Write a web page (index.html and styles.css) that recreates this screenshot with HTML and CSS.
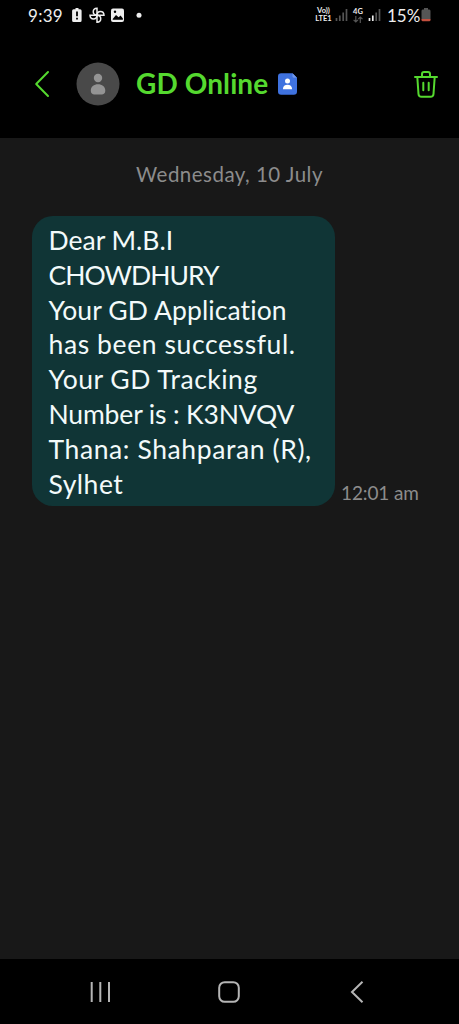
FILE: index.html
```html
<!DOCTYPE html>
<html lang="en">
<head>
<meta charset="utf-8">
<title>GD Online</title>
<link rel="stylesheet" href="styles.css">
</head>
<body>
<div class="phone">
  <header class="top">
    <div class="status">
      <span class="clock">9:39</span>
      <svg class="status-icons" width="76" height="30" viewBox="0 0 76 30">
        <path fill="#eee" d="M3.500 8h3v1.300h1.600a1.500 1.500 0 0 1 1.500 1.500v9.700a1.500 1.500 0 0 1-1.500 1.500h-6.500a1.500 1.500 0 0 1-1.500-1.500v-9.700a1.500 1.500 0 0 1 1.500-1.500h1.900z"/>
        <path stroke="#000" stroke-width="1.800" d="M5 11.500v4.700M5 17.700v1.800"/>
        <g fill="none" stroke="#eee" stroke-width="1.500">
          <path id="petal" d="M25 15.200V8.200c5 .2 5 6.800 0 7" transform="matrix(-1 0 0 1 50 0)"/>
          <use href="#petal" transform="rotate(90 25 15.200)"/>
          <use href="#petal" transform="rotate(180 25 15.200)"/>
          <use href="#petal" transform="rotate(270 25 15.200)"/>
        </g>
        <rect x="39" y="8.500" width="13" height="13.500" rx="2" fill="#eee"/>
        <path fill="#000" d="M40.700 19l3.300-4 2.600 2.300 2-1.800 2.300 3v1.200H40.700z"/>
        <circle cx="43" cy="11.700" r="1.200" fill="#000"/>
        <circle cx="67" cy="15.200" r="2.500" fill="#eee"/>
      </svg>
      <span class="volte"><span>Vo))</span><span>LTE1</span></span>
      <svg class="bars" width="13" height="14" viewBox="0 0 13 14"><path stroke="#555" stroke-width="1.700" d="M1.500 10v3M4.800 7.500V13M8.200 4.500V13M11.500 1v12"/></svg>
      <span class="network"><span>4G</span><svg width="10" height="7" viewBox="0 0 10 7"><path fill="none" stroke="#555" stroke-width="1.200" d="M2.800 0v6M.6 3.800l2.200 2.200L5 3.800M7.300 7V1M5.100 3.200L7.300 1l2.200 2.200"/></svg></span>
      <svg class="bars second" width="13" height="14" viewBox="0 0 13 14"><path stroke="#eee" stroke-width="1.700" d="M1.500 10v3M4.800 7.500V13"/><path stroke="#555" stroke-width="1.700" d="M8.200 4.500V13M11.500 1v12"/></svg>
      <span class="percent">15%</span>
      <svg class="battery" width="10" height="14" viewBox="0 0 10 14"><path fill="#555" d="M3 0h4v1.500h1.300Q9.500 1.500 9.500 3v8.500h-9V3Q.5 1.500 1.700 1.500H3z"/><path fill="#c4503f" d="M.5 11h9v1q0 1.300-1.300 1.300H1.800Q.5 13.300.5 12z"/></svg>
    </div>
    <div class="contact">
      <svg class="back" width="16" height="28" viewBox="0 0 16 28"><path d="M14 2L2.200 14 14 26"/></svg>
      <svg class="avatar" width="44" height="44" viewBox="0 0 44 44"><circle cx="22" cy="22" r="21.500" fill="#494949"/><circle cx="22" cy="16" r="4.200" fill="#949494"/><path fill="#949494" d="M14.800 28.700C14.800 24.700 18 22.300 22 22.300s7.300 2.400 7.300 6.400c0 2.600-1.700 3.700-3.500 3.700h-7.500c-1.800 0-3.500-1.100-3.500-3.700z"/></svg>
      <h1 class="name">GD Online</h1>
      <svg class="card" width="19" height="22" viewBox="0 0 19 22"><path fill="#3f72df" d="M3.200.3h11.300L19 4.800v13.700a3.200 3.200 0 0 1-3.200 3.200H3.200A3.200 3.200 0 0 1 0 18.500v-15A3.200 3.200 0 0 1 3.200.3z"/><path fill="#7097e9" d="M14.500.3L19 4.800h-3a1.500 1.500 0 0 1-1.500-1.500z"/><circle cx="9.500" cy="7.900" r="2.500" fill="#fff"/><path fill="#fff" d="M4.900 16.200c0-2.900 2-4.400 4.600-4.400s4.600 1.500 4.600 4.400z"/></svg>
      <svg class="trash" width="24" height="28" viewBox="0 0 24 28"><path d="M1 7h22M8 7V4q0-2 2-2h4q2 0 2 2v3M3.300 7l1.200 17q.2 2.800 3 2.800h9q2.800 0 3-2.800L20.700 7M9.300 12.800v7.400M14.700 12.800v7.400"/></svg>
    </div>
  </header>
  <main class="thread">
    <p class="date">Wednesday, 10 July</p>
    <div class="message">
      <div class="bubble">
        <span class="line l1">Dear M.B.I</span>
        <span class="line l2">CHOWDHURY</span>
        <span class="line l3">Your GD Application</span>
        <span class="line l4">has been successful.</span>
        <span class="line l5">Your GD Tracking</span>
        <span class="line l6">Number is : K3NVQV</span>
        <span class="line l7">Thana: Shahparan (R),</span>
        <span class="line l8">Sylhet</span>
      </div>
      <time class="time">12:01 am</time>
    </div>
  </main>
  <nav class="nav">
    <svg width="22" height="24" viewBox="0 0 22 24"><path d="M1.700 2v20M10.300 2v20M19 2v20"/></svg>
    <svg width="22" height="24" viewBox="0 0 22 24"><rect x="1.200" y="2.200" width="19.600" height="19.600" rx="5.500"/></svg>
    <svg width="14" height="24" viewBox="0 0 14 24"><path d="M12.500 1.800L2 12l10.500 10.200"/></svg>
  </nav>
</div>
</body>
</html>
```
FILE: styles.css
```css
body {
  margin: 0;
  background: #000;
  font-family: Lato, "Open Sans", sans-serif;
  font-variant-ligatures: none;
}

.phone {
  display: flex;
  flex-direction: column;
  width: 459px;
  height: 1024px;
  overflow: hidden;
}

.top {
  height: 138px;
  background: #000;
}

.status {
  display: flex;
  align-items: center;
  height: 30px;
  padding-left: 28px;
  color: #eee;
  white-space: nowrap;
}

.clock {
  width: 44px;
  font-size: 17px;
  letter-spacing: 0.300px;
}

.status-icons {
  margin-right: 167px;
}

.volte,
.network {
  display: flex;
  flex-direction: column;
  align-items: center;
  font-size: 7.500px;
  font-weight: 700;
  line-height: 8px;
}

.volte {
  width: 17px;
}

.network {
  width: 12px;
  margin-left: 4px;
}

.bars {
  margin-left: 3px;
}

.second {
  margin-left: 4px;
}

.percent {
  width: 34px;
  margin-left: 6px;
  font-size: 17px;
}

.contact {
  display: flex;
  align-items: center;
  height: 108px;
  padding-left: 34px;
}

.back,
.trash {
  fill: none;
  stroke: #55d92f;
  stroke-width: 2;
  stroke-linecap: round;
  stroke-linejoin: round;
}

.avatar {
  margin-left: 26px;
}

.name {
  width: 142px;
  margin: 0 0 2px 16px;
  color: #55d92f;
  font-size: 28px;
  font-weight: 700;
  line-height: 34px;
  letter-spacing: 0.100px;
  white-space: nowrap;
}

.trash {
  margin-left: 117px;
}

.thread {
  box-sizing: border-box;
  height: 821px;
  padding-top: 23px;
  background: #181818;
}

.date {
  margin: 0;
  color: #8c8c8c;
  font-size: 20.500px;
  line-height: 26px;
  letter-spacing: 0.480px;
  text-align: center;
}

.message {
  display: flex;
  align-items: flex-end;
  margin: 29px 0 0 32px;
}

.bubble {
  box-sizing: border-box;
  width: 303px;
  height: 290px;
  padding: 7px 0 0 16.500px;
  border-radius: 21px;
  background: #103536;
  color: #f3fafa;
  font-size: 26.500px;
  line-height: 34.800px;
}

.line {
  display: block;
  white-space: nowrap;
}

.l2 {
  letter-spacing: -0.950px;
}

.l3 {
  letter-spacing: 0.100px;
}

.l4,
.l7 {
  letter-spacing: 0.600px;
}

.l5,
.l8 {
  letter-spacing: 0.500px;
}

.l6 {
  letter-spacing: -0.150px;
}

.time {
  margin-left: 6px;
  color: #8c8c8c;
  font-size: 19px;
  line-height: 26px;
  letter-spacing: -0.120px;
}

.nav {
  display: flex;
  align-items: center;
  height: 65px;
  padding-left: 90px;
  gap: 105.500px;
  fill: none;
  stroke: #b5b5b5;
  stroke-width: 2;
}

.nav svg:last-child {
  margin-left: 5px;
}
```
